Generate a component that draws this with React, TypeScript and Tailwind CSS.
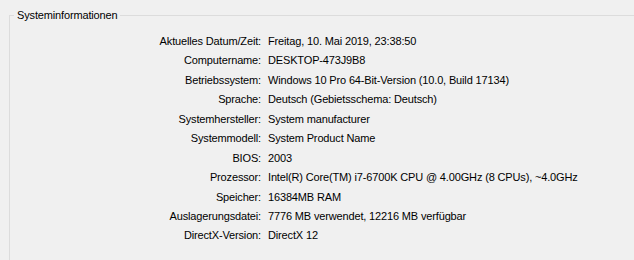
const rows: [string, string][] = [
  ["Aktuelles Datum/Zeit:", "Freitag, 10. Mai 2019, 23:38:50"],
  ["Computername:", "DESKTOP-473J9B8"],
  ["Betriebssystem:", "Windows 10 Pro 64-Bit-Version (10.0, Build 17134)"],
  ["Sprache:", "Deutsch (Gebietsschema: Deutsch)"],
  ["Systemhersteller:", "System manufacturer"],
  ["Systemmodell:", "System Product Name"],
  ["BIOS:", "2003"],
  ["Prozessor:", "Intel(R) Core(TM) i7-6700K CPU @ 4.00GHz (8 CPUs), ~4.0GHz"],
  ["Speicher:", "16384MB RAM"],
  ["Auslagerungsdatei:", "7776 MB verwendet, 12216 MB verfügbar"],
  ["DirectX-Version:", "DirectX 12"]
];

export default function App() {
  return (
    <main
      className="h-[260px] w-[634px] overflow-hidden bg-[#f0f0f0] text-[11px] tracking-[-0.15px] text-black"
      style={{ fontFamily: '"Liberation Sans", Arial, sans-serif' }}
    >
      <fieldset className="ml-[9px] mt-[9px] w-[700px] border border-[#dcdcdc] pb-10">
        <legend className="ml-[4px] px-[3px] leading-[13px]">Systeminformationen</legend>
        <div className="mt-[10px] grid grid-cols-[251px_1fr] gap-x-[7px]">
          {rows.map(([label, value]) => (
            <div className="contents" key={label}>
              <span className="text-right leading-[19.43px]">{label}</span>
              <span className="leading-[19.43px]">{value}</span>
            </div>
          ))}
        </div>
      </fieldset>
    </main>
  );
}
